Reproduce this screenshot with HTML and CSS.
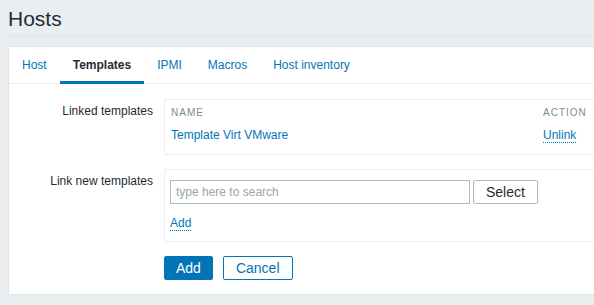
FILE: index.html
```html
<!DOCTYPE html>
<html lang="en">

<head>
  <meta charset="UTF-8">
  <title>Hosts</title>
  <link rel="stylesheet" href="styles.css">
</head>

<body>
  <div class="page">
    <header class="header">
      <h1>Hosts</h1>
    </header>

    <div class="panel">
      <ul class="tabs">
        <li><a href="#">Host</a></li>
        <li class="active"><a href="#">Templates</a></li>
        <li><a href="#">IPMI</a></li>
        <li><a href="#">Macros</a></li>
        <li><a href="#">Host inventory</a></li>
      </ul>

      <form class="form">
        <label class="form-label">Linked templates</label>
        <div class="form-box linked-box">
          <div class="linked-table">
            <div class="th">Name</div>
            <div class="th">Action</div>
            <div class="td"><a href="#">Template Virt VMware</a></div>
            <div class="td"><a href="#" class="dotted">Unlink</a></div>
          </div>
        </div>

        <label class="form-label" for="search">Link new templates</label>
        <div class="form-box new-box">
          <div class="search-row">
            <input type="text" id="search" placeholder="type here to search">
            <button type="button" class="btn-alt">Select</button>
          </div>
          <a href="#" class="dotted add-link">Add</a>
        </div>

        <div></div>
        <div class="form-buttons">
          <button type="submit" class="btn-main">Add</button>
          <button type="button" class="btn-outline">Cancel</button>
        </div>
      </form>
    </div>
  </div>
</body>

</html>
```

FILE: styles.css
```css
* {
  margin: 0;
  padding: 0;
  box-sizing: border-box;
  font-family: 'Liberation Sans', Arial, sans-serif;
}

body {
  background-color: #ebeef0;
  color: #1f2c33;
  font-size: 12px;
  overflow: hidden;
}

a {
  color: #0275b8;
  text-decoration: none;
}

.page {
  padding-left: 8px;
  width: 660px;
}

.header {
  padding: 7px 0 4px;
  border-bottom: 1px solid #dfe4e7;
  margin-bottom: 10px;
}

h1 {
  font-size: 21px;
  font-weight: normal;
  line-height: 24px;
}

.panel {
  background-color: #ffffff;
  border: 1px solid #dfe4e7;
}

/* Tabs */
.tabs {
  list-style: none;
  display: flex;
  border-bottom: 1px solid #ebeef0;
  height: 37px;
}

.tabs li {
  height: 37px;
  margin-bottom: -1px;
}

.tabs a {
  display: block;
  padding: 2px 13px 0;
  line-height: 32px;
  border-bottom: 3px solid transparent;
}

.tabs .active a {
  color: #1f2c33;
  font-weight: bold;
  border-bottom-color: #0275b8;
}

/* Form */
.form {
  display: grid;
  grid-template-columns: 144px 1fr;
  column-gap: 11px;
  row-gap: 14px;
  padding: 15px 0 14px;
}

.form-label {
  text-align: right;
  line-height: 16px;
  padding-top: 4px;
}

.form-box {
  border: 1px solid #ebeef0;
}

.linked-box {
  padding: 6px 6px 11px;
}

.linked-table {
  display: grid;
  grid-template-columns: 372px auto;
  row-gap: 8px;
}

.th {
  font-size: 10px;
  line-height: 14px;
  letter-spacing: 1px;
  text-transform: uppercase;
  color: #768d99;
}

.td {
  line-height: 14px;
}

.dotted {
  display: inline-block;
  line-height: 14px;
  border-bottom: 1px dotted #0275b8;
}

.new-box {
  padding: 10px 5px;
}

.search-row {
  display: flex;
  gap: 3px;
}

input[type="text"] {
  width: 300px;
  height: 24px;
  padding: 0 5px;
  border: 1px solid #acbbc2;
  font-size: 12px;
  color: #1f2c33;
}

input::placeholder {
  color: #9aa6ad;
}

.add-link {
  margin-top: 12px;
}

button {
  height: 24px;
  padding: 0 12px;
  font-size: 14px;
  border-radius: 2px;
  cursor: pointer;
}

.btn-alt {
  background-color: #ffffff;
  border: 1px solid #acbbc2;
  color: #1f2c33;
}

.form-buttons {
  display: flex;
  gap: 10px;
}

.btn-main {
  padding: 0 11px;
  background-color: #0275b8;
  border: 1px solid #0275b8;
  color: #ffffff;
}

.btn-outline {
  background-color: #ffffff;
  border: 1px solid #0275b8;
  color: #0275b8;
}
```
